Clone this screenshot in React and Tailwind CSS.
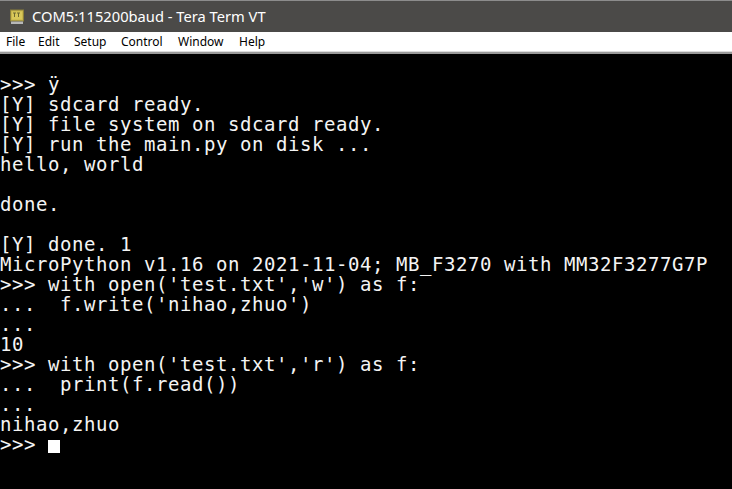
import React from "react";

const lines = [
  ">>> ÿ",
  "[Y] sdcard ready.",
  "[Y] file system on sdcard ready.",
  "[Y] run the main.py on disk ...",
  "hello, world",
  "",
  "done.",
  "",
  "[Y] done. 1",
  "MicroPython v1.16 on 2021-11-04; MB_F3270 with MM32F3277G7P",
  ">>> with open('test.txt','w') as f:",
  "...  f.write('nihao,zhuo')",
  "...",
  "10",
  ">>> with open('test.txt','r') as f:",
  "...  print(f.read())",
  "...",
  "nihao,zhuo",
];

function TitleIcon() {
  return (
    <svg width="16" height="16" viewBox="0 0 16 16">
      <rect x="1.5" y="1" width="13" height="11" fill="#c8b64a" stroke="#8a7f3a" strokeWidth="1" />
      <rect x="3" y="2.5" width="10" height="8" fill="#d8c85a" />
      <path d="M4 4h3M5.5 4v4M8 4h3M9.5 4v4" stroke="#6e6a30" strokeWidth="1" />
      <rect x="2" y="12.5" width="12" height="2.5" fill="#b8b8b8" />
    </svg>
  );
}

export default function App() {
  const menus = [
    ["File", "w-[32px]"],
    ["Edit", "w-[36px]"],
    ["Setup", "w-[47px]"],
    ["Control", "w-[57px]"],
    ["Window", "w-[61px]"],
    ["Help", "w-[40px]"],
  ];
  return (
    <div className="w-[732px] h-[489px] overflow-hidden bg-black flex flex-col">
      <div className="h-[1px] bg-[#8c8c8c]" />
      <div className="h-[31px] bg-[#4b4a48] flex items-center pl-[9px] gap-[7px]">
        <TitleIcon />
        <span
          className="text-white text-[14.7px] leading-none"
          style={{ fontFamily: '"Noto Sans", "Open Sans", sans-serif' }}
        >
          COM5:115200baud - Tera Term VT
        </span>
      </div>
      <div
        className="h-[19px] bg-white flex items-center pl-[6px] text-[12px] text-black leading-none"
        style={{ fontFamily: '"Noto Sans", "Open Sans", sans-serif' }}
      >
        {menus.map(([m, w]) => (
          <span key={m} className={w}>
            {m}
          </span>
        ))}
      </div>
      <div className="h-[1px] bg-[#dcdcdc]" />
      <div className="h-[2px] bg-[#9a9a9a]" />
      <div
        className="flex-1 pt-[20px] text-[#f4f4f4] text-[19px] tracking-[0.56px]"
        style={{ fontFamily: '"DejaVu Sans Mono", monospace' }}
      >
        {lines.map((l, i) => (
          <div key={i} className="h-[20px] leading-[20px] whitespace-pre">
            {l}
          </div>
        ))}
        <div className="h-[20px] leading-[20px] whitespace-pre flex items-start">
          <span>{">>> "}</span>
          <span className="mt-[6px] w-[12px] h-[13px] bg-white" />
        </div>
      </div>
    </div>
  );
}
